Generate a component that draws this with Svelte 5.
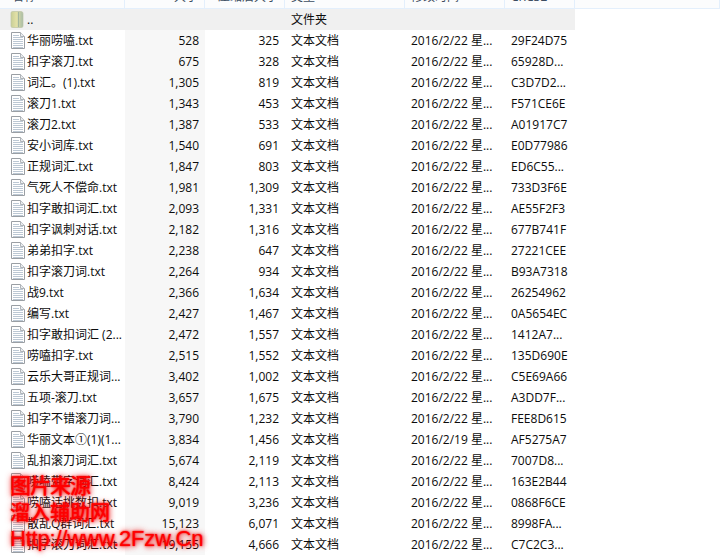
<script>
  const folderRow = { name: '..', type: '文件夹' };

  // name, size, packed, date, crc
  const files = [
    ['华丽唠嗑.txt', '528', '325', '2016/2/22', '29F24D75'],
    ['扣字滚刀.txt', '675', '328', '2016/2/22', '65928D...'],
    ['词汇。(1).txt', '1,305', '819', '2016/2/22', 'C3D7D2...'],
    ['滚刀1.txt', '1,343', '453', '2016/2/22', 'F571CE6E'],
    ['滚刀2.txt', '1,387', '533', '2016/2/22', 'A01917C7'],
    ['安小词库.txt', '1,540', '691', '2016/2/22', 'E0D77986'],
    ['正规词汇.txt', '1,847', '803', '2016/2/22', 'ED6C55...'],
    ['气死人不偿命.txt', '1,981', '1,309', '2016/2/22', '733D3F6E'],
    ['扣字敢扣词汇.txt', '2,093', '1,331', '2016/2/22', 'AE55F2F3'],
    ['扣字讽刺对话.txt', '2,182', '1,316', '2016/2/22', '677B741F'],
    ['弟弟扣字.txt', '2,238', '647', '2016/2/22', '27221CEE'],
    ['扣字滚刀词.txt', '2,264', '934', '2016/2/22', 'B93A7318'],
    ['战9.txt', '2,366', '1,634', '2016/2/22', '26254962'],
    ['编写.txt', '2,427', '1,467', '2016/2/22', '0A5654EC'],
    ['扣字敢扣词汇 (2...', '2,472', '1,557', '2016/2/22', '1412A7...'],
    ['唠嗑扣字.txt', '2,515', '1,552', '2016/2/22', '135D690E'],
    ['云乐大哥正规词...', '3,402', '1,002', '2016/2/22', 'C5E69A66'],
    ['五项-滚刀.txt', '3,657', '1,675', '2016/2/22', 'A3DD7F...'],
    ['扣字不错滚刀词...', '3,790', '1,232', '2016/2/22', 'FEE8D615'],
    ['华丽文本①(1)(1...', '3,834', '1,456', '2016/2/19', 'AF5275A7'],
    ['乱扣滚刀词汇.txt', '5,674', '2,119', '2016/2/22', '7007D8...'],
    ['唠嗑带字词汇.txt', '8,424', '2,113', '2016/2/22', '163E2B44'],
    ['唠嗑话挑数扣.txt', '9,019', '3,236', '2016/2/22', '0868F6CE'],
    ['散乱Q群词汇.txt', '15,123', '6,071', '2016/2/22', '8998FA...'],
    ['扣字滚刀词汇.txt', '19,155', '4,666', '2016/2/22', 'C7C2C3...']
  ];

  const headers = [
    ['name', '名称'],
    ['num', '大小'],
    ['num', '压缩后大小'],
    ['type', '类型'],
    ['date', '修改时间'],
    ['crc', 'CRC32']
  ];
</script>

<div class="page">
  <div class="head">
    {#each headers as h}
      <span class={h[0]}><i>{h[1]}</i></span>
    {/each}
    <span></span>
  </div>

  <div class="row folder">
    <span class="name">
      <svg class="dir" width="14" height="17" viewBox="0 0 14 17">
        <defs>
          <linearGradient id="dirFill" x1="0" x2="1" y1="0" y2="0">
            <stop offset="0" stop-color="#c9cf97" />
            <stop offset="0.45" stop-color="#e2e0a6" />
            <stop offset="1" stop-color="#a9bda6" />
          </linearGradient>
        </defs>
        <path d="M1 2 Q1 0.5 2.5 0.5 H11 Q13 0.5 13 2.5 V15 Q13 16.5 11 16.5 H2.5 Q1 16.5 1 15 Z" fill="url(#dirFill)" stroke="#bfc4a4" stroke-width="0.7" />
        <path d="M8.5 1 V16" stroke="#97ad9b" stroke-width="0.8" />
      </svg>
      <em>{folderRow.name}</em>
    </span>
    <span class="num"></span>
    <span class="num"></span>
    <span class="type">{folderRow.type}</span>
    <span class="date"></span>
    <span class="crc"></span>
  </div>

  {#each files as f}
    <div class="row">
      <span class="name">
        <svg width="14" height="17" viewBox="0 0 14 17">
          <path d="M0.5 0.5 H9.5 L13.5 4.5 V16.5 H0.5 Z" fill="#fff" stroke="#9a9fa4" />
          <path d="M9.5 0.5 V4.5 H13.5" fill="#e8ecef" stroke="#b0b4b8" />
          <path d="M2 3.5 H8 M2 5.5 H12 M2 7.5 H12 M2 9.5 H12 M2 11.5 H12 M2 13.5 H12 M2 15.5 H12" stroke="#bcc8d4" />
        </svg>
        <em>{f[0]}</em>
      </span>
      <span class="num">{f[1]}</span>
      <span class="num">{f[2]}</span>
      <span class="type">文本文档</span>
      <span class="date">{f[3]} 星...</span>
      <span class="crc">{f[4]}</span>
    </div>
  {/each}

  <div class="mark">
    <div class="title">图片来源</div>
    <div>溜入辅助网</div>
    <div class="url">Http://www.2Fzw.Cn</div>
  </div>
</div>

<style>
  :global(body) {
    margin: 0;
    background: #fff;
  }

  .page {
    position: relative;
    width: 720px;
    height: 558px;
    overflow: hidden;
    font-family: "Open Sans", "Noto Sans CJK SC", sans-serif;
    font-size: 12px;
    color: #0c0c0c;
  }

  .head {
    display: grid;
    grid-template-columns: 125px 80px 80px 120px 100px 70px 1fr;
    height: 9px;
    overflow: hidden;
    background: #fbfcfd;
    border-bottom: 1px solid #e3effc;
    box-sizing: border-box;
    color: #3c4c60;
  }

  .head span {
    height: 8px;
    overflow: hidden;
    border-right: 1px solid #e3effc;
    box-sizing: border-box;
    white-space: nowrap;
  }

  /* header is scrolled away, only the feet of the letters show */
  .head i {
    display: block;
    font-style: normal;
    line-height: 16px;
    margin-top: -11px;
  }

  .head .name {
    display: block;
    padding-left: 12px;
  }

  .row {
    display: grid;
    grid-template-columns: 125px 80px 80px 120px 100px 70px;
    width: 575px;
    height: 21px;
    padding-bottom: 1px;
    box-sizing: border-box;
    align-items: center;
    background: linear-gradient(to right, transparent 125px, #f7f7f7 125px, #f7f7f7 205px, transparent 205px);
  }

  .row span {
    white-space: nowrap;
    overflow: hidden;
  }

  .folder {
    background: #f0f0f0;
  }

  .name {
    display: flex;
    align-items: center;
    padding-left: 11px;
    gap: 2px;
  }

  .dir {
    margin-left: -1px;
    margin-right: 1px;
  }

  .name em {
    font-style: normal;
  }

  .num {
    text-align: right;
    padding-right: 6px;
  }

  .type,
  .date,
  .crc {
    padding-left: 6px;
  }

  .mark {
    position: absolute;
    left: 10px;
    top: 471px;
    color: #ff0000;
    font-family: "Noto Sans CJK SC", sans-serif;
    font-weight: 500;
    font-size: 20px;
    line-height: 27px;
    text-shadow: 0 0 2px #f00000, 0 0 6px rgba(255, 0, 0, 0.8), 1px 1px 5px rgba(210, 0, 0, 0.55);
  }

  .mark .title {
    font-size: 21px;
    letter-spacing: -1px;
  }

  .mark .url {
    font-family: "Liberation Sans", sans-serif;
    font-size: 22px;
    letter-spacing: -0.2px;
  }
</style>
